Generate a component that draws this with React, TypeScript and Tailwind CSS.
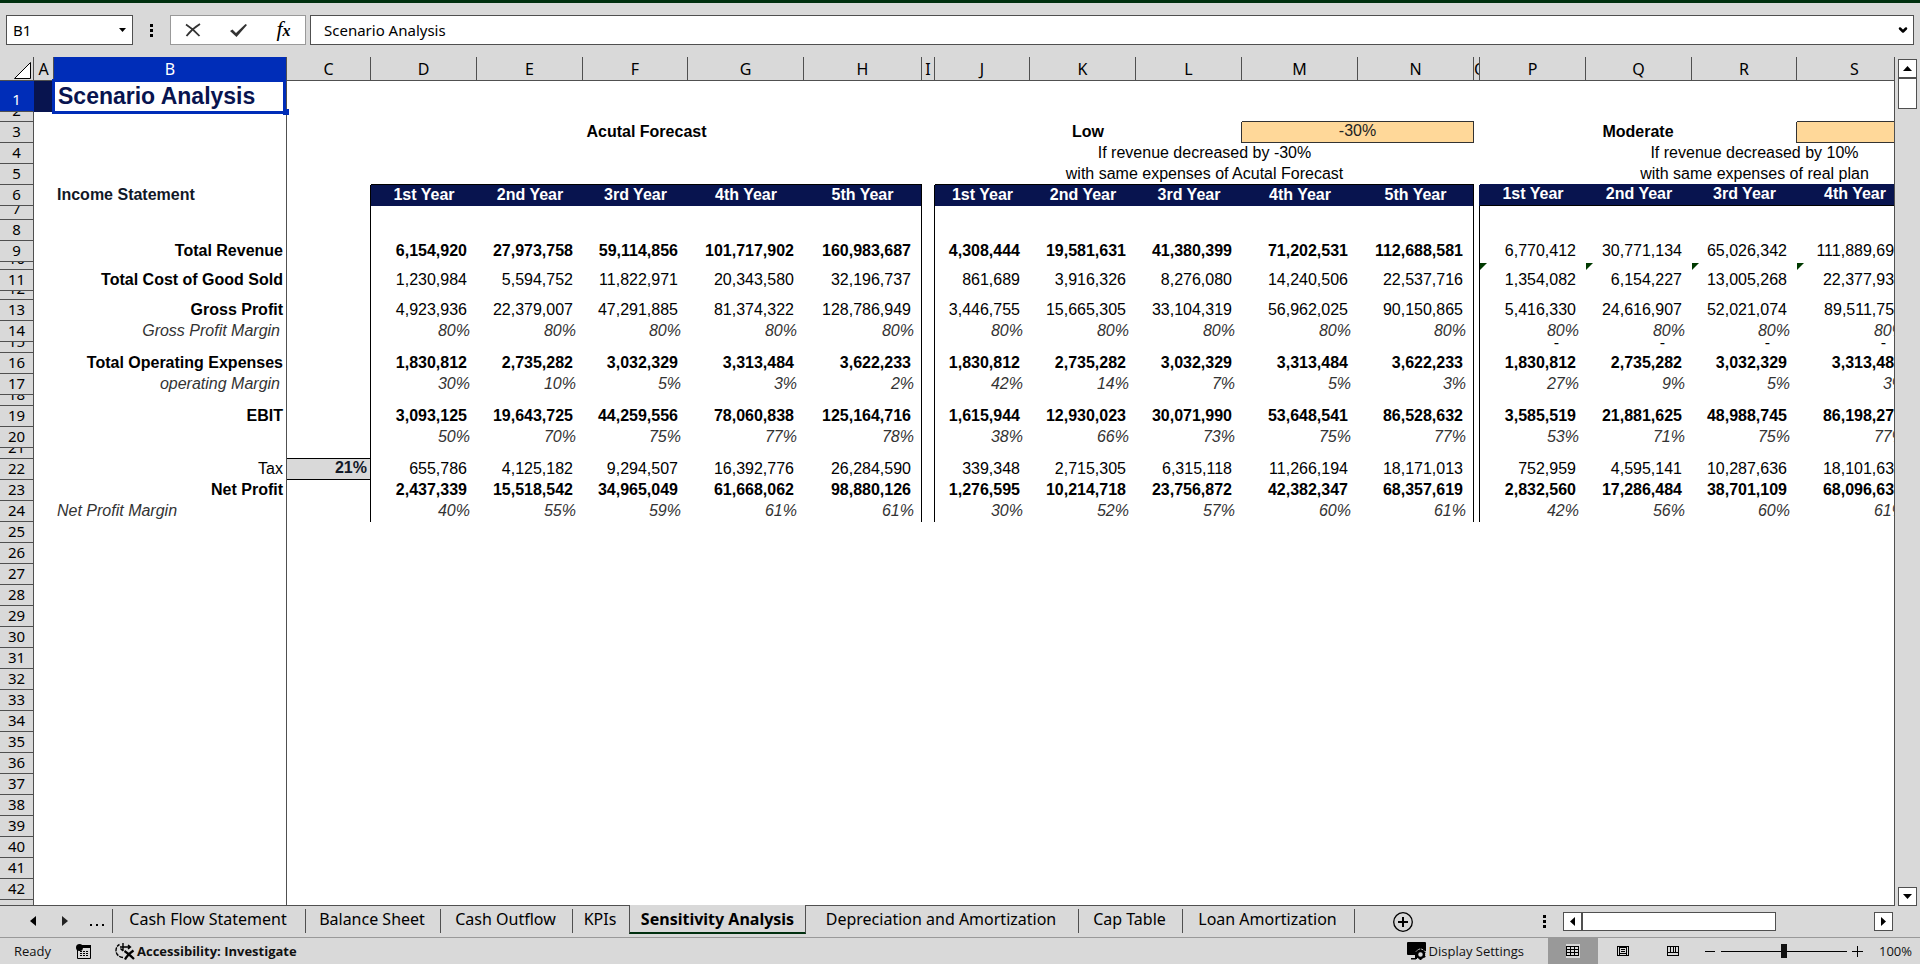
import React from 'react';
import { ChevronDown } from 'lucide-react';

type Kind = 'number' | 'bold' | 'percent' | 'dash';

interface RowData {
  n: number;
  h: number;
  label?: string;
  labelClass?: string;
  actual?: string[];
  low?: string[];
  moderate?: string[];
  kind?: Kind;
  moderateKind?: Kind;
}

const columns = [
  { name: 'A', w: 20 },
  { name: 'B', w: 233 },
  { name: 'C', w: 84 },
  { name: 'D', w: 106 },
  { name: 'E', w: 106 },
  { name: 'F', w: 105 },
  { name: 'G', w: 116 },
  { name: 'H', w: 118 },
  { name: 'I', w: 13 },
  { name: 'J', w: 95 },
  { name: 'K', w: 106 },
  { name: 'L', w: 106 },
  { name: 'M', w: 116 },
  { name: 'N', w: 116 },
  { name: 'O', w: 6 },
  { name: 'P', w: 106 },
  { name: 'Q', w: 106 },
  { name: 'R', w: 105 },
  { name: 'S', w: 116 },
];

const years = ['1st Year', '2nd Year', '3rd Year', '4th Year', '5th Year'];

const boldRight = 'justify-end pr-[3px] font-bold';
const italicRight = 'justify-end pr-[6px] italic text-[#333333]';

const rows: RowData[] = [
  { n: 7, h: 14 },
  { n: 8, h: 21 },
  {
    n: 9, h: 21, label: 'Total Revenue', labelClass: boldRight, kind: 'bold', moderateKind: 'number',
    actual: ['6,154,920', '27,973,758', '59,114,856', '101,717,902', '160,983,687'],
    low: ['4,308,444', '19,581,631', '41,380,399', '71,202,531', '112,688,581'],
    moderate: ['6,770,412', '30,771,134', '65,026,342', '111,889,692'],
  },
  { n: 10, h: 8 },
  {
    n: 11, h: 21, label: 'Total Cost of Good Sold', labelClass: boldRight, kind: 'number',
    actual: ['1,230,984', '5,594,752', '11,822,971', '20,343,580', '32,196,737'],
    low: ['861,689', '3,916,326', '8,276,080', '14,240,506', '22,537,716'],
    moderate: ['1,354,082', '6,154,227', '13,005,268', '22,377,938'],
  },
  { n: 12, h: 9 },
  {
    n: 13, h: 21, label: 'Gross Profit', labelClass: boldRight, kind: 'number',
    actual: ['4,923,936', '22,379,007', '47,291,885', '81,374,322', '128,786,949'],
    low: ['3,446,755', '15,665,305', '33,104,319', '56,962,025', '90,150,865'],
    moderate: ['5,416,330', '24,616,907', '52,021,074', '89,511,754'],
  },
  {
    n: 14, h: 21, label: 'Gross Profit Margin', labelClass: italicRight, kind: 'percent',
    actual: ['80%', '80%', '80%', '80%', '80%'],
    low: ['80%', '80%', '80%', '80%', '80%'],
    moderate: ['80%', '80%', '80%', '80%'],
  },
  { n: 15, h: 11, kind: 'dash', moderate: ['-', '-', '-', '-'] },
  {
    n: 16, h: 21, label: 'Total Operating Expenses', labelClass: boldRight, kind: 'bold',
    actual: ['1,830,812', '2,735,282', '3,032,329', '3,313,484', '3,622,233'],
    low: ['1,830,812', '2,735,282', '3,032,329', '3,313,484', '3,622,233'],
    moderate: ['1,830,812', '2,735,282', '3,032,329', '3,313,484'],
  },
  {
    n: 17, h: 21, label: 'operating Margin', labelClass: italicRight, kind: 'percent',
    actual: ['30%', '10%', '5%', '3%', '2%'],
    low: ['42%', '14%', '7%', '5%', '3%'],
    moderate: ['27%', '9%', '5%', '3%'],
  },
  { n: 18, h: 11 },
  {
    n: 19, h: 21, label: 'EBIT', labelClass: boldRight, kind: 'bold',
    actual: ['3,093,125', '19,643,725', '44,259,556', '78,060,838', '125,164,716'],
    low: ['1,615,944', '12,930,023', '30,071,990', '53,648,541', '86,528,632'],
    moderate: ['3,585,519', '21,881,625', '48,988,745', '86,198,270'],
  },
  {
    n: 20, h: 21, kind: 'percent',
    actual: ['50%', '70%', '75%', '77%', '78%'],
    low: ['38%', '66%', '73%', '75%', '77%'],
    moderate: ['53%', '71%', '75%', '77%'],
  },
  { n: 21, h: 11 },
  {
    n: 22, h: 21, label: 'Tax', labelClass: 'justify-end pr-[3px]', kind: 'number',
    actual: ['655,786', '4,125,182', '9,294,507', '16,392,776', '26,284,590'],
    low: ['339,348', '2,715,305', '6,315,118', '11,266,194', '18,171,013'],
    moderate: ['752,959', '4,595,141', '10,287,636', '18,101,637'],
  },
  {
    n: 23, h: 21, label: 'Net Profit', labelClass: boldRight, kind: 'bold',
    actual: ['2,437,339', '15,518,542', '34,965,049', '61,668,062', '98,880,126'],
    low: ['1,276,595', '10,214,718', '23,756,872', '42,382,347', '68,357,619'],
    moderate: ['2,832,560', '17,286,484', '38,701,109', '68,096,633'],
  },
  {
    n: 24, h: 21, label: 'Net Profit Margin', labelClass: 'pl-[3px] italic text-[#333333]', kind: 'percent',
    actual: ['40%', '55%', '59%', '61%', '61%'],
    low: ['30%', '52%', '57%', '60%', '61%'],
    moderate: ['42%', '56%', '60%', '61%'],
  },
];

const emptyRows = Array.from({ length: 19 }, (_, i) => 25 + i);

const kindClasses: Record<Kind, string> = {
  number: 'justify-end pr-[10px]',
  bold: 'justify-end pr-[10px] font-bold',
  percent: 'justify-end pr-[7px] italic text-[#333333]',
  dash: 'justify-end pr-[27px] leading-[16px]',
};

const yearClass = 'justify-center font-bold text-white';

const tabs = [
  { name: 'Cash Flow Statement', width: 'w-[193px]' },
  { name: 'Balance Sheet', width: 'w-[135px]' },
  { name: 'Cash Outflow', width: 'w-[132px]' },
  { name: 'KPIs', width: 'w-[56px]' },
  { name: 'Sensitivity Analysis', width: 'w-[177px]' },
  { name: 'Depreciation and Amortization', width: 'w-[273px]' },
  { name: 'Cap Table', width: 'w-[104px]' },
  { name: 'Loan Amortization', width: 'w-[172px]' },
];

const activeTab = 'Sensitivity Analysis';

const RowHeader: React.FC<{ n: number; h: number; selected?: boolean }> = ({ n, h, selected }) => (
  <th
    scope="row"
    className={`border-r border-b p-0 font-normal ${
      selected
        ? 'border-[#002db8] border-b-[#505050] bg-[#002db8] text-white leading-[24px]'
        : 'border-[#505050] bg-[#d9d9d9] text-black leading-[22px]'
    }`}
  >
    <div
      className="flex items-end justify-center overflow-hidden font-['Noto_Sans','Open_Sans',sans-serif] text-[15px]/[inherit]"
      style={{ height: h - 1 }}
    >
      <span className="shrink-0">{n}</span>
    </div>
  </th>
);

// The inner box has a fixed height, so short rows clip their text
const TextCell: React.FC<{
  h: number;
  text?: string;
  span?: number;
  className?: string;
  boxClass?: string;
}> = ({ h, text, span, className = '', boxClass = '' }) => (
  <td colSpan={span} className={`p-0 ${className}`}>
    {text && (
      <div className={`flex items-end overflow-hidden pb-[2px] whitespace-nowrap ${boxClass}`} style={{ height: h - 1 }}>
        <span className="shrink-0">{text}</span>
      </div>
    )}
  </td>
);

const FlagCell = () => (
  <td className="p-0">
    <svg className="block h-[7px] w-[7px]" viewBox="0 0 7 7" aria-hidden="true">
      <path d="M0 0h7L0 7z" fill="#003a00" />
    </svg>
  </td>
);

const FormulaBar = () => (
  <div className="flex h-[54px] shrink-0 items-start gap-1 bg-[#d9d9d9] px-[6px] pt-3 text-[15px]">
    <div className="flex h-[30px] w-[127px] items-center border border-[#505050] bg-white">
      <input aria-label="Name box" defaultValue="B1" className="w-full min-w-0 pl-[6px] outline-none" />
      <button aria-label="Open name list" className="pr-[6px]">
        <svg className="h-[4px] w-[7px]" viewBox="0 0 7 4" aria-hidden="true">
          <path d="M0 0h7L3.5 4z" />
        </svg>
      </button>
    </div>
    <div className="flex h-[30px] w-[29px] items-center justify-center">
      <svg className="h-[13px] w-[3px]" viewBox="0 0 3 13" aria-hidden="true">
        <path d="M0 0h3v3H0zM0 5h3v3H0zM0 10h3v3H0z" />
      </svg>
    </div>
    <div className="flex h-[30px] w-[136px] items-center justify-around border border-[#999999] bg-white">
      <button aria-label="Cancel">
        <svg className="h-[14px] w-[16px]" viewBox="0 0 16 14" fill="none" stroke="#333" strokeWidth="1.8" aria-hidden="true">
          <path d="M1 1.5c4 2.5 9 6.5 13.5 11.5M15 1C10 4 5 8.5 1.5 13" />
        </svg>
      </button>
      <button aria-label="Enter">
        <svg className="h-[13px] w-[17px]" viewBox="0 0 17 13" aria-hidden="true">
          <path d="M0 7l2.5-1.5L6 9 15.5 0 17 1 6.500 13z" fill="#333" />
        </svg>
      </button>
      <button aria-label="Insert function" className="font-['Liberation_Serif',serif] text-[22px] leading-[22px] italic">
        f<span className="text-[16px] font-bold">x</span>
      </button>
    </div>
    <div className="flex h-[30px] flex-1 items-center border border-[#505050] bg-white">
      <input aria-label="Formula" defaultValue="Scenario Analysis" className="min-w-0 flex-1 pl-[13px] outline-none" />
      <button aria-label="Expand formula bar" className="pr-1">
        <ChevronDown className="h-3 w-3" strokeWidth={5} />
      </button>
    </div>
  </div>
);

const Sheet = () => (
  <div className="min-w-0 flex-1 overflow-hidden border-r border-b border-[#505050] bg-white">
    <table className="w-full min-w-[2029px] table-fixed border-separate border-spacing-0 font-['Liberation_Sans',Arial,sans-serif] text-[16px] leading-[18px] text-black">
      <colgroup>
        <col className="w-[34px]" />
        {columns.map((c) => (
          <col key={c.name} style={{ width: c.w }} />
        ))}
        <col />
      </colgroup>
      <thead className="bg-[#d9d9d9] font-['Noto_Sans','Open_Sans',sans-serif] leading-[21px]">
        <tr className="h-6">
          <td className="border-r border-b border-[#505050] p-0 pt-1 pr-[2px]">
            <svg className="ml-auto h-[17px] w-[17px]" viewBox="0 0 17 17" aria-hidden="true">
              <path d="M16.5 .5v16H.5z" fill="#fff" stroke="#000" />
            </svg>
          </td>
          {columns.map((c) => (
            <th
              key={c.name}
              scope="col"
              className={`border-r border-b p-0 pt-[2px] font-normal ${
                c.name === 'B' ? 'border-[#002db8] border-r-[#505050] bg-[#002db8] text-white' : 'border-[#505050]'
              }`}
            >
              <div className="overflow-hidden text-center">{c.name}</div>
            </th>
          ))}
          <th className="border-b border-[#505050]" />
        </tr>
      </thead>
      <tbody>
        <tr className="h-[31px]">
          <RowHeader n={1} h={31} selected />
          <td className="bg-[#08144f]" />
          <td className="relative border-r border-[#505050] p-0 pb-[2px] pl-1 text-[23px] leading-[28px] font-bold whitespace-nowrap text-[#08144f]">
            Scenario Analysis
            <span className="absolute -top-[2px] right-0 -bottom-[2px] -left-[2px] border-3 border-[#002db8]" />
            <span className="absolute -right-[3px] -bottom-[3px] h-[6px] w-[6px] bg-[#002db8]" />
          </td>
          <td colSpan={18} />
        </tr>
        <tr className="h-[10px]">
          <RowHeader n={2} h={10} />
          <td />
          <td className="border-r border-[#505050]" />
          <td colSpan={10} />
          <td colSpan={2} className="border-b border-[#333333]" />
          <td colSpan={4} />
          <td colSpan={2} className="border-b border-[#333333]" />
        </tr>
        <tr className="h-[21px]">
          <RowHeader n={3} h={21} />
          <td />
          <td className="border-r border-[#505050]" />
          <td />
          <TextCell h={21} span={5} text="Acutal Forecast" boxClass="justify-center font-bold" />
          <td />
          <TextCell h={21} span={3} text="Low" className="border-r border-[#333333]" boxClass="justify-center font-bold" />
          <TextCell
            h={21}
            span={2}
            text="-30%"
            className="border-r border-b border-[#333333] bg-[#ffd899] text-[#222222]"
            boxClass="justify-center"
          />
          <td />
          <TextCell h={21} span={3} text="Moderate" className="border-r border-[#333333]" boxClass="justify-center font-bold" />
          <td colSpan={2} className="border-b border-[#333333] bg-[#ffd899]" />
        </tr>
        <tr className="h-[21px]">
          <RowHeader n={4} h={21} />
          <td />
          <td className="border-r border-[#505050]" />
          <td colSpan={7} />
          <TextCell h={21} span={5} text="If revenue decreased by -30%" boxClass="justify-center" />
          <td />
          <TextCell h={21} span={5} text="If revenue decreased by 10%" boxClass="justify-center" />
        </tr>
        <tr className="h-[21px]">
          <RowHeader n={5} h={21} />
          <td />
          <td className="border-r border-[#505050]" />
          <td />
          <td colSpan={5} className="border-b border-black" />
          <td />
          <TextCell
            h={21}
            span={5}
            text="with same expenses of Acutal Forecast"
            className="border-b border-black"
            boxClass="justify-center leading-[16px]"
          />
          <td />
          <TextCell
            h={21}
            span={5}
            text="with same expenses of real plan"
            className="border-b border-[#08144f]"
            boxClass="justify-center leading-[16px]"
          />
        </tr>
        <tr className="h-[21px]">
          <RowHeader n={6} h={21} />
          <td />
          <TextCell h={21} text="Income Statement" className="border-r border-[#505050] text-[#111827]" boxClass="pl-[3px] font-bold" />
          <td className="border-r border-black" />
          {years.map((y, i) => (
            <TextCell
              key={y}
              h={21}
              text={y}
              className={i === 4 ? 'border-r border-black bg-[#08144f]' : 'bg-[#08144f]'}
              boxClass={yearClass}
            />
          ))}
          <td className="border-r border-black" />
          {years.map((y, i) => (
            <TextCell
              key={y}
              h={21}
              text={y}
              className={i === 4 ? 'border-r border-black bg-[#08144f]' : 'bg-[#08144f]'}
              boxClass={yearClass}
            />
          ))}
          <td className="border-r border-[#08144f]" />
          {years.slice(0, 4).map((y) => (
            <TextCell key={y} h={21} text={y} className="border-b border-black bg-[#08144f]" boxClass={yearClass} />
          ))}
          <td className="border-b border-black bg-[#08144f]" />
        </tr>
        {rows.map((row) => {
          const kind = kindClasses[row.kind ?? 'number'];
          const moderateKind = kindClasses[row.moderateKind ?? row.kind ?? 'number'];
          return (
            <tr key={row.n} style={{ height: row.h }}>
              <RowHeader n={row.n} h={row.h} />
              <td />
              <TextCell h={row.h} text={row.label} className="border-r border-[#505050]" boxClass={row.labelClass} />
              <TextCell
                h={row.h}
                text={row.n === 22 ? '21%' : undefined}
                className={`border-r border-black ${
                  row.n === 21 ? 'border-b' : row.n === 22 ? 'border-b bg-[#d9d9d9] text-[#111827]' : ''
                }`}
                boxClass="justify-end pr-[3px] font-bold"
              />
              {years.map((y, i) => (
                <TextCell
                  key={y}
                  h={row.h}
                  text={row.actual?.[i]}
                  className={i === 4 ? 'border-r border-black' : ''}
                  boxClass={kind}
                />
              ))}
              <td className="border-r border-black" />
              {years.map((y, i) => (
                <TextCell
                  key={y}
                  h={row.h}
                  text={row.low?.[i]}
                  className={i === 4 ? 'border-r border-black' : ''}
                  boxClass={kind}
                />
              ))}
              <td className="border-r border-black" />
              {years
                .slice(0, 4)
                .map((y, i) =>
                  row.n === 10 ? (
                    <FlagCell key={y} />
                  ) : (
                    <TextCell key={y} h={row.h} text={row.moderate?.[i]} boxClass={moderateKind} />
                  ),
                )}
              <td />
            </tr>
          );
        })}
        {emptyRows.map((n) => (
          <tr key={n} className="h-[21px]">
            <RowHeader n={n} h={21} />
            <td />
            <td className="border-r border-[#505050]" />
            <td colSpan={18} />
          </tr>
        ))}
      </tbody>
    </table>
  </div>
);

const scrollButton = 'flex h-[19px] w-[19px] shrink-0 items-center justify-center border border-[#505050] bg-white';

const VerticalScrollbar = () => (
  <div className="flex w-[25px] shrink-0 flex-col items-center pt-[2px]">
    <button aria-label="Scroll up" className={scrollButton}>
      <svg className="h-[5px] w-[9px]" viewBox="0 0 9 5" aria-hidden="true">
        <path d="M4.5 0L9 5H0z" />
      </svg>
    </button>
    <div className="h-[31px] w-[19px] border border-[#505050] bg-white" />
    <button aria-label="Scroll down" className={`mt-auto ${scrollButton}`}>
      <svg className="h-[5px] w-[9px]" viewBox="0 0 9 5" aria-hidden="true">
        <path d="M0 0h9L4.5 5z" />
      </svg>
    </button>
  </div>
);

const SheetTabs = () => (
  <div className="flex h-8 shrink-0 items-start border-b border-[#999999] bg-[#d9d9d9] text-[16px] leading-[20px]">
    <div className="mt-[3px] flex h-6 w-[113px] shrink-0 items-center border-r border-[#505050] pl-[30px]">
      <button aria-label="Previous sheet">
        <svg className="h-[10px] w-[6px]" viewBox="0 0 6 10" aria-hidden="true">
          <path d="M6 0v10L0 5z" />
        </svg>
      </button>
      <button aria-label="Next sheet" className="ml-[26px]">
        <svg className="h-[10px] w-[6px]" viewBox="0 0 6 10" aria-hidden="true">
          <path d="M0 0v10l6-5z" fill="#222" />
        </svg>
      </button>
      <button aria-label="More sheets" className="ml-[22px] pt-2">
        <svg className="h-[2px] w-[14px]" viewBox="0 0 14 2" aria-hidden="true">
          <path d="M0 0h2v2H0zM6 0h2v2H6zM12 0h2v2h-2z" />
        </svg>
      </button>
    </div>
    <nav aria-label="Sheets" className="flex shrink-0">
      {tabs.map((tab) =>
        tab.name === activeTab ? (
          <button
            key={tab.name}
            className={`relative -mt-px flex h-[29px] justify-center border-x border-b-2 border-x-[#505050] border-b-[#00300f] bg-[#d9d9d9] pt-1 font-bold whitespace-nowrap ${tab.width}`}
          >
            {tab.name}
          </button>
        ) : (
          <button
            key={tab.name}
            className={`mt-[3px] flex h-6 justify-center pr-[2px] whitespace-nowrap ${
              tab.name === 'KPIs' ? '' : 'border-r border-[#505050]'
            } ${tab.width}`}
          >
            {tab.name}
          </button>
        ),
      )}
    </nav>
    <button aria-label="New sheet" className="mt-[6px] ml-[38px] shrink-0">
      <svg className="block h-[20px] w-[20px]" viewBox="0 0 20 20" fill="none" stroke="#000" aria-hidden="true">
        <circle cx="10" cy="10" r="9.3" strokeWidth="1.3" />
        <path d="M10 5v10M5 10h10" strokeWidth="2" />
      </svg>
    </button>
    <div className="ml-auto flex h-[31px] shrink-0 items-center pr-[27px]">
      <svg className="mr-[17px] h-[13px] w-[3px]" viewBox="0 0 3 13" aria-hidden="true">
        <path d="M0 0h3v3H0zM0 5h3v3H0zM0 10h3v3H0z" />
      </svg>
      <button aria-label="Scroll left" className={scrollButton}>
        <svg className="h-[9px] w-[5px]" viewBox="0 0 5 9" aria-hidden="true">
          <path d="M5 0v9L0 4.5z" />
        </svg>
      </button>
      <div className="h-[19px] w-[194px] border border-[#505050] bg-white" />
      <button aria-label="Scroll right" className={`ml-[98px] ${scrollButton}`}>
        <svg className="h-[9px] w-[5px]" viewBox="0 0 5 9" aria-hidden="true">
          <path d="M0 0v9l5-4.5z" />
        </svg>
      </button>
    </div>
  </div>
);

const StatusBar = () => (
  <div className="flex h-[26px] shrink-0 items-center bg-[#d9d9d9] pl-[14px] font-['Open_Sans','Noto_Sans',sans-serif] text-[13px] leading-[18px] whitespace-nowrap text-[#111111]">
    <span className="w-[62px]">Ready</span>
    <button aria-label="Record macro" className="w-[39px]">
      <svg className="h-[15px] w-[15px]" viewBox="0 0 15 15" aria-hidden="true">
        <circle cx="3.5" cy="3.5" r="3.5" />
        <path d="M5 1h10v3H5z" />
        <path d="M1.5 6v8.5h13V2" fill="none" stroke="#000" />
        <path d="M4 7.5h9M4 9.5h9M4 11.5h9" stroke="#000" strokeDasharray="2 1" />
      </svg>
    </button>
    <button className="flex items-center gap-[2px] font-bold">
      <svg className="h-[18px] w-[20px]" viewBox="0 0 20 18" fill="none" stroke="#000" strokeWidth="1.4" aria-hidden="true">
        <path d="M8 15.5C3.5 15 1 12 1 8.5 1 5.5 2.5 3.5 4.5 2.5" strokeDasharray="4 1" />
        <path d="M8 1v8M5.5 6.500L8 9M5 5h10M13 3l2.500 2L13 7" />
        <path d="M9.500 9c3 2 6 4.500 9.500 8M18.500 8.500C15 11 12 13.500 10 17.500" strokeWidth="2.200" />
      </svg>
      Accessibility: Investigate
    </button>
    <div className="ml-auto flex h-full items-center">
      <button className="mr-6 flex items-center gap-[3px]">
        <svg className="h-[18px] w-[19px]" viewBox="0 0 19 18" aria-hidden="true">
          <path d="M0 1q0-1 1-1h17q1 0 1 1v8L9 13H1q-1 0-1-1zM4 16h5v1.500H4zM8 12h2v5H8z" />
          <circle cx="13.5" cy="12.5" r="3.5" fill="#d9d9d9" stroke="#000" strokeWidth="2.5" />
          <path d="M13.5 7v2M13.5 16v2M8.7 10l1.8 1M16.500 14l1.800 1M8.700 15l1.800-1M16.500 11l1.800-1" stroke="#000" strokeWidth="2" />
          <path d="M9 9.5q4.500-5 9 0" fill="none" stroke="#d9d9d9" strokeDasharray="2 1" />
        </svg>
        Display Settings
      </button>
      <button aria-label="Normal view" className="flex h-full w-[50px] items-center justify-center bg-[#999999]">
        <svg className="h-[14px] w-[14px]" viewBox="0 0 14 14" shapeRendering="crispEdges" aria-hidden="true">
          <path d="M0 0h14v14H0z" fill="#d9d9d9" />
          <path d="M.5 2.5h12v9H.5zM.5 5.5h12M.5 8.5h12M4.500 2.500v9M8.500 2.500v9" fill="none" stroke="#000" />
        </svg>
      </button>
      <button aria-label="Page layout view" className="flex h-full w-[50px] items-center justify-center">
        <svg className="h-[12px] w-[12px]" viewBox="0 0 12 12" fill="none" stroke="#000" shapeRendering="crispEdges" aria-hidden="true">
          <path d="M.5 1.5h11v9H.5zM2.5 1.5v9M9.500 1.500v9M2.500 2.500h7M4 4.500h4M4 6.500h4M2.500 8.500h7" />
        </svg>
      </button>
      <button aria-label="Page break preview" className="flex h-full w-[50px] items-center justify-center">
        <svg className="h-[12px] w-[12px]" viewBox="0 0 12 12" fill="none" stroke="#000" shapeRendering="crispEdges" aria-hidden="true">
          <path d="M.5 1.5h11v9H.5zM.5 7.5h11M3.500 2v5.500M6.500 2v5.500M8.500 2v5.500" />
        </svg>
      </button>
      <button aria-label="Zoom out" className="ml-[7px]">
        <svg className="h-[11px] w-[11px]" viewBox="0 0 11 11" aria-hidden="true">
          <path d="M0 5h10v1H0z" />
        </svg>
      </button>
      <input
        type="range"
        aria-label="Zoom"
        min={0}
        max={100}
        defaultValue={50}
        className="mx-[5px] h-[14px] w-[126px] appearance-none bg-transparent [&::-webkit-slider-runnable-track]:h-px [&::-webkit-slider-runnable-track]:bg-black [&::-webkit-slider-thumb]:-mt-[7px] [&::-webkit-slider-thumb]:h-[14px] [&::-webkit-slider-thumb]:w-[6px] [&::-webkit-slider-thumb]:appearance-none [&::-webkit-slider-thumb]:bg-[#111111]"
      />
      <button aria-label="Zoom in" className="w-[27px]">
        <svg className="h-[11px] w-[11px]" viewBox="0 0 11 11" aria-hidden="true">
          <path d="M0 5h11v1H0zM5 0h1v11H5z" />
        </svg>
      </button>
      <span className="w-[41px]">100%</span>
    </div>
  </div>
);

const App = () => (
  <div className="flex h-screen flex-col overflow-hidden bg-white pb-[2px] font-['Noto_Sans','Open_Sans',sans-serif] text-black">
    <div className="h-[3px] shrink-0 bg-[#00300f]" />
    <FormulaBar />
    <div className="flex min-h-0 flex-1 bg-[#d9d9d9]">
      <Sheet />
      <VerticalScrollbar />
    </div>
    <SheetTabs />
    <StatusBar />
  </div>
);

export default App;
